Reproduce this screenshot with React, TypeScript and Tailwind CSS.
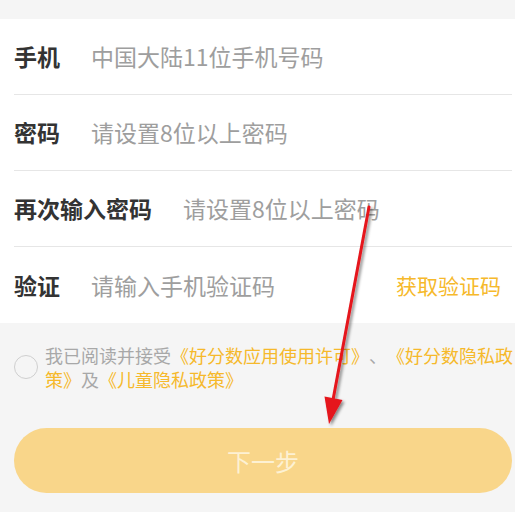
const rows = [
  { label: "手机", placeholder: "中国大陆11位手机号码" },
  { label: "密码", placeholder: "请设置8位以上密码" },
  { label: "再次输入密码", placeholder: "请设置8位以上密码" },
  { label: "验证", placeholder: "请输入手机验证码", action: "获取验证码" },
];

const Arrow = () => (
  <svg
    className="absolute inset-0 pointer-events-none"
    width="515"
    height="512"
    viewBox="0 0 515 512"
  >
    <defs>
      <filter id="shadow" x="-50%" y="-10%" width="200%" height="120%">
        <feDropShadow dx="2" dy="2" stdDeviation="1.6" floodColor="#000" floodOpacity="0.45" />
      </filter>
    </defs>
    <g filter="url(#shadow)">
      <line x1="369" y1="207" x2="333" y2="400" stroke="#e5141b" strokeWidth="3" strokeLinecap="round" />
      <polygon points="329,424 324.5,396.5 342.5,400" fill="#e5141b" />
    </g>
  </svg>
);

export default function App() {
  return (
    <div
      className="relative w-[515px] h-[512px] overflow-hidden bg-[#f5f5f5] pt-[19px]"
      style={{ fontFamily: '"Noto Sans CJK SC", "Noto Sans", sans-serif' }}
    >
      {/* form fields */}
      <div className="bg-white">
        <div className="ml-[14px] mr-[3px]">
          {rows.map((row, i) => (
            <div
              key={i}
              className={`flex items-center h-[76px] ${
                i < rows.length - 1 ? "border-b border-[#e6e6e6]" : ""
              }`}
            >
              <span className="text-[23px] font-bold text-[#333] leading-none">
                {row.label}
              </span>
              <span className="ml-[31px] flex-1 text-[23px] text-[#9e9e9e] leading-none">
                {row.placeholder}
              </span>
              {row.action && (
                <span className="pr-[11px] text-[21px] text-[#f6b92b] leading-none">
                  {row.action}
                </span>
              )}
            </div>
          ))}
        </div>
      </div>

      {/* agreement */}
      <div className="flex items-center pl-[14px] pt-[20px]">
        <span className="w-[24px] h-[24px] flex-none rounded-full border border-[#cfcfcf]" />
        <p className="ml-[7px] flex-1 text-[18px] leading-[24px] text-[#a8a8a8] [text-spacing-trim:space-all]">
          我已阅读并接受
          <span className="text-[#f6b92b]">《好分数应用使用许可》</span>、
          <span className="text-[#f6b92b]">《好分数隐私政策》</span>及
          <span className="text-[#f6b92b]">《儿童隐私政策》</span>
        </p>
      </div>

      {/* next button */}
      <div className="ml-[14px] mr-[3px] mt-[37px]">
        <button className="w-full h-[65px] rounded-full bg-[#f9d68a] text-[24px] text-[#fdf1d3]">
          下一步
        </button>
      </div>

      <Arrow />
    </div>
  );
}
